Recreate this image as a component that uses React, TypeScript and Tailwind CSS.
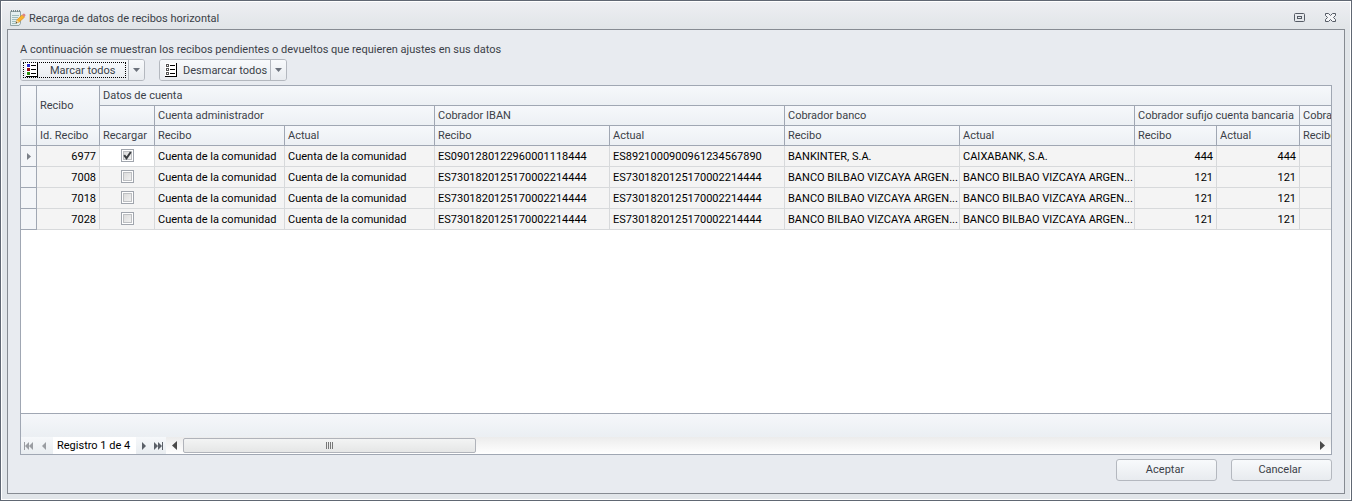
import { useState } from "react";

interface Recibo {
  id: number;
  cuenta: [string, string];
  iban: [string, string];
  banco: [string, string];
  sufijo: [string, string];
}

const COMUNIDAD = "Cuenta de la comunidad";
const BBVA = "BANCO BILBAO VIZCAYA ARGEN...";
const IBAN_BBVA = "ES7301820125170002214444";

const pendiente = (id: number): Recibo => ({
  id,
  cuenta: [COMUNIDAD, COMUNIDAD],
  iban: [IBAN_BBVA, IBAN_BBVA],
  banco: [BBVA, BBVA],
  sufijo: ["121", "121"],
});

const recibos: Recibo[] = [
  {
    id: 6977,
    cuenta: [COMUNIDAD, COMUNIDAD],
    iban: ["ES0901280122960001118444", "ES8921000900961234567890"],
    banco: ["BANKINTER, S.A.", "CAIXABANK, S.A."],
    sufijo: ["444", "444"],
  },
  pendiente(7008),
  pendiente(7018),
  pendiente(7028),
];

const th = "h-5 border-r border-b border-[#a0a7b3] bg-linear-to-b from-[#f6f8fb] to-[#ecf0f4] px-[3px] text-left font-normal text-[#3b3f48] whitespace-nowrap";
const td = "h-[21px] border-r border-b border-[#d7d9db] bg-[#f4f4f4] px-[3px] pt-[2px] text-black whitespace-nowrap";
const buttonFace = "bg-linear-to-b from-[#f8fafc] to-[#e8ebef] text-[#3b3f48]";

function NoteIcon() {
  return (
    <svg width="16" height="16" viewBox="0 0 16 16" aria-hidden="true">
      <path d="M.5 1.5h10v12l-1.5 2H.5z" fill="#e3efef" stroke="#93a5a6" />
      <path d="M1 1h10" stroke="#75898b" strokeWidth="2" strokeDasharray="1 1" />
      <path d="M2 5.5h7M2 7.5h6M2 9.5h5M2 11.5h4M2 13.5h5" stroke="#9fbcbc" />
      <path d="M6 13l1-3.2L12.2 4.8 14.5 7.2 9.2 12z" fill="#f8b32c" stroke="#d78a18" strokeWidth=".6" />
      <path d="M6 13l.9-3L9 12z" fill="#f2dcb0" />
      <path d="M5.8 13.2l.5-1.4.9.9z" fill="#333" />
      <path d="M12 5l1.6-1.4q1.5-.1 2 1.7L14.4 7z" fill="#d9848a" />
    </svg>
  );
}

function ListIcon({ colored }: { colored?: boolean }) {
  const fills = colored ? ["#2a2ad0", "#9c0c0c", "#2c8f10"] : ["#fff", "#fff", "#fff"];
  return (
    <svg width="12" height="14" viewBox="0 0 12 14" aria-hidden="true" shapeRendering="crispEdges">
      <rect width="11" height="13" fill="#fff" />
      {fills.map((fill, i) => (
        <g key={i}>
          {colored ? (
            <rect x="1" y={1 + i * 4} width="3" height="3" fill={fill} />
          ) : (
            <rect x="1.5" y={1.5 + i * 4} width="2" height="2" fill={fill} stroke="#555" />
          )}
          <rect x="5" y={2 + i * 4} width="5" height="1" fill="#000" />
        </g>
      ))}
      <path d="M11.5 0v14M0 13.5h12" stroke="#000" />
    </svg>
  );
}

interface SplitButtonProps {
  label: string;
  colored?: boolean;
  focused?: boolean;
  onClick: () => void;
}

function SplitButton({ label, colored, focused, onClick }: SplitButtonProps) {
  return (
    <div className="flex h-[22px] overflow-hidden rounded-[3px] border border-[#b4b8bf]">
      <button onClick={onClick} className={`flex p-[2px] whitespace-nowrap ${focused ? "w-[107px]" : "w-[110px]"} ${buttonFace}`}>
        <span className={`flex h-4 flex-1 items-center border border-dotted pl-[2px] ${focused ? "border-black" : "border-transparent"}`}>
          <ListIcon colored={colored} />
          <span className={`pt-[2px] ${focused ? "ml-3" : "ml-[6px]"}`}>{label}</span>
        </span>
      </button>
      <button aria-label={`${label}: opciones`} className={`flex w-4 items-center justify-center border-l border-[#b4b8bf] ${buttonFace}`}>
        <svg width="7" height="4" viewBox="0 0 7 4" aria-hidden="true">
          <path d="M0 0h7L3.5 4z" fill="#6c727c" />
        </svg>
      </button>
    </div>
  );
}

function CheckCell({ checked, onChange, label }: { checked: boolean; onChange: () => void; label: string }) {
  return (
    <label className="grid place-items-center">
      <input
        type="checkbox"
        checked={checked}
        onChange={onChange}
        aria-label={label}
        className="col-start-1 row-start-1 grid size-[13px] appearance-none border border-[#a0a5ad] bg-white p-px before:border before:border-[#bdbfc2] before:bg-linear-to-br before:from-[#dcdcdc] before:to-[#f0f0f0]"
      />
      {checked && (
        <svg className="pointer-events-none col-start-1 row-start-1" width="9" height="9" viewBox="0 0 9 9" aria-hidden="true">
          <path d="M1.2 4.2l2.3 3L7.8 1" fill="none" stroke="#3a3d40" strokeWidth="2" />
        </svg>
      )}
    </label>
  );
}

function NavButton({ label, d, disabled }: { label: string; d: string; disabled?: boolean }) {
  return (
    <button aria-label={label} disabled={disabled} className="flex w-[15px] items-center justify-center text-[#5b6068] disabled:text-[#9a9da2]">
      <svg width="10" height="8" viewBox="0 0 10 8" fill="currentColor" aria-hidden="true">
        <path d={d} />
      </svg>
    </button>
  );
}

export default function App() {
  const [marcados, setMarcados] = useState<number[]>([6977]);

  const toggle = (id: number) =>
    setMarcados(prev => (prev.includes(id) ? prev.filter(x => x !== id) : [...prev, id]));

  return (
    <div className="flex min-h-screen flex-col border border-[#606773] bg-[#e1e5e9] font-['Roboto','Noto_Sans',sans-serif] text-[11px] leading-4 text-[#3b3f48]">
      <div className="flex flex-1 flex-col border border-white px-[5px] pb-[5px]">
        {/* Title bar */}
        <header className="-mx-[5px] flex h-[27px] items-center bg-linear-to-b from-[#edeef2] to-[#e1e5e8] pt-1 pr-[14px] pl-2">
          <NoteIcon />
          <h1 className="ml-[3px] flex-1 pt-[2px]">Recarga de datos de recibos horizontal</h1>
          <button aria-label="Maximizar">
            <svg width="11" height="9" viewBox="0 0 11 9" fill="none" stroke="#555b65" aria-hidden="true">
              <rect x=".5" y=".5" width="10" height="8" rx="1" />
              <rect x="3.5" y="3.5" width="4" height="2" />
            </svg>
          </button>
          <button aria-label="Cerrar" className="ml-5">
            <svg width="11" height="9" viewBox="0 0 11 9" aria-hidden="true">
              <path d="M.5.5h3l2 2 2-2h3v2l-2 2 2 2v2h-3l-2-2-2 2h-3v-2l2-2-2-2z" fill="#f4f5f7" stroke="#555b65" />
            </svg>
          </button>
        </header>

        <main className="flex flex-1 flex-col border border-[#868b92] bg-[#e8ebf0] px-3 pt-3 pb-3">
          <p>A continuación se muestran los recibos pendientes o devueltos que requieren ajustes en sus datos</p>

          <div className="mt-px flex gap-[14px]">
            <SplitButton label="Marcar todos" colored focused onClick={() => setMarcados(recibos.map(r => r.id))} />
            <SplitButton label="Desmarcar todos" onClick={() => setMarcados([])} />
          </div>

          {/* Grid */}
          <div className="mt-1 flex flex-1 flex-col border border-[#a0a7b3] bg-white">
            <div className="w-full flex-1 overflow-hidden">
              <table className="w-[1361px] table-fixed border-separate border-spacing-0">
                <colgroup>
                  <col className="w-4" />
                  <col className="w-[63px]" />
                  <col className="w-[55px]" />
                  <col className="w-[130px]" />
                  <col className="w-[150px]" />
                  <col className="w-[175px]" />
                  <col className="w-[175px]" />
                  <col className="w-[175px]" />
                  <col className="w-[175px]" />
                  <col className="w-[82px]" />
                  <col className="w-[83px]" />
                  <col className="w-[82px]" />
                </colgroup>
                <thead>
                  <tr>
                    <th rowSpan={2} className={th} />
                    <th rowSpan={2} className={th}>Recibo</th>
                    <th colSpan={10} className={th}>Datos de cuenta</th>
                  </tr>
                  <tr>
                    <th className={th} />
                    <th colSpan={2} className={th}>Cuenta administrador</th>
                    <th colSpan={2} className={th}>Cobrador IBAN</th>
                    <th colSpan={2} className={th}>Cobrador banco</th>
                    <th colSpan={2} className={th}>Cobrador sufijo cuenta bancaria</th>
                    <th className={th}>Cobrador</th>
                  </tr>
                  <tr>
                    <th className={th} />
                    <th className={th}>Id. Recibo</th>
                    <th className={th}>Recargar</th>
                    {["cuenta", "iban", "banco", "sufijo"].flatMap(g => [
                      <th key={`${g}-r`} className={th}>Recibo</th>,
                      <th key={`${g}-a`} className={th}>Actual</th>,
                    ])}
                    <th className={th}>Recibo</th>
                  </tr>
                </thead>
                <tbody>
                  {recibos.map((r, i) => (
                    <tr key={r.id}>
                      <td className="h-[21px] border-r border-b border-[#a0a7b3] bg-[#f3f5f8]">
                        {i === 0 && (
                          <svg className="mx-auto" width="4" height="7" viewBox="0 0 4 7" aria-hidden="true">
                            <path d="M0 0l4 3.5L0 7z" fill="#7b8088" />
                          </svg>
                        )}
                      </td>
                      <td className={`${td} text-right`}>{r.id}</td>
                      <td className={`h-[21px] border-r border-b border-[#d7d9db] pt-[3px] align-top ${i === 0 ? "bg-white" : "bg-[#f4f4f4]"}`}>
                        <CheckCell checked={marcados.includes(r.id)} onChange={() => toggle(r.id)} label={`Recargar ${r.id}`} />
                      </td>
                      {[...r.cuenta, ...r.iban, ...r.banco].map((text, n) => (
                        <td key={n} className={td}>{text}</td>
                      ))}
                      {r.sufijo.map((text, n) => (
                        <td key={n} className={`${td} text-right`}>{text}</td>
                      ))}
                      <td className={td} />
                    </tr>
                  ))}
                </tbody>
              </table>
            </div>

            <div className="h-6 border-t border-[#a0a7b3] bg-linear-to-b from-[#f5f7fa] to-[#ebeff3]" />

            {/* Record navigator and horizontal scroll bar */}
            <div className="flex h-[17px]">
              <nav className="flex bg-linear-to-b from-[#f6f8fa] to-[#e9edf1]">
                <NavButton label="Primero" disabled d="M0 0h1v8H0zM5 0v8L1 4zM9 0v8L5 4z" />
                <NavButton label="Anterior" disabled d="M7 0v8L3 4z" />
                <span className="ml-[2px] w-[83px] bg-white pt-px pl-1 text-black">Registro 1 de 4</span>
                <NavButton label="Siguiente" d="M3 0v8l4-4z" />
                <NavButton label="Último" d="M0 0v8l4-4zM4 0v8l4-4zM8 0h1v8H8z" />
              </nav>
              <div className="flex flex-1 items-center bg-linear-to-b from-[#ececec] to-white">
                <button aria-label="Desplazar a la izquierda" className="flex w-[17px] justify-center">
                  <svg width="5" height="9" viewBox="0 0 5 9" aria-hidden="true">
                    <path d="M5 0v9L0 4.5z" fill="#4a4a4a" />
                  </svg>
                </button>
                <div className="flex h-[15px] w-[293px] items-center justify-center gap-px rounded-[2px] border border-[#b0b3ba] bg-linear-to-b from-[#f3f4f4] to-[#e5e6e6]">
                  <span className="h-[7px] w-px bg-[#777]" />
                  <span className="h-[7px] w-px bg-[#777]" />
                  <span className="h-[7px] w-px bg-[#777]" />
                  <span className="h-[7px] w-px bg-[#777]" />
                </div>
                <button aria-label="Desplazar a la derecha" className="ml-auto flex w-[17px] justify-center">
                  <svg width="5" height="9" viewBox="0 0 5 9" aria-hidden="true">
                    <path d="M0 0v9l5-4.5z" fill="#4a4a4a" />
                  </svg>
                </button>
              </div>
            </div>
          </div>

          <div className="mt-1 flex justify-end gap-[14px]">
            <button className={`h-[22px] w-[101px] rounded-[3px] border border-[#b4b8bf] pr-[3px] ${buttonFace}`}>Aceptar</button>
            <button className={`h-[22px] w-[101px] rounded-[3px] border border-[#b4b8bf] pr-[3px] ${buttonFace}`}>Cancelar</button>
          </div>
        </main>
      </div>
    </div>
  );
}
